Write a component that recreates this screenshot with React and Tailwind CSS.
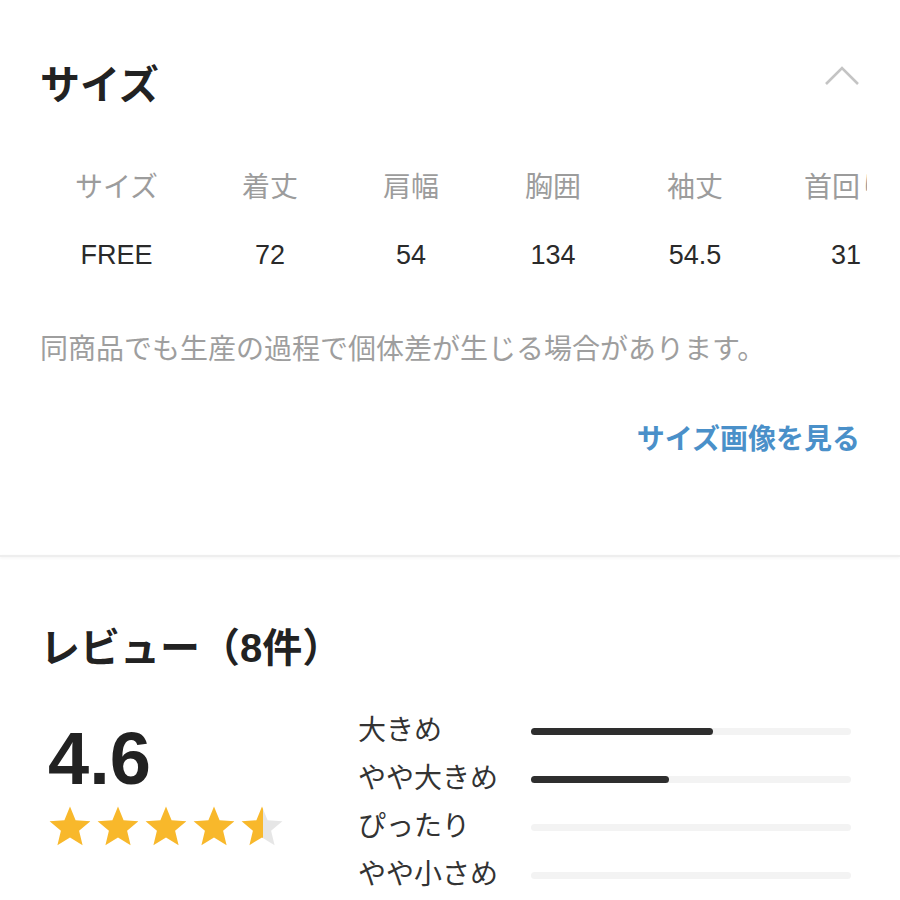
import React from "react";

const FONT = { fontFamily: '"Liberation Sans", "Noto Sans CJK JP", sans-serif' };

function Star({ fill = 1, id }) {
  const d = "M22 1.5 L27.6 15.2 L42.4 16.3 L31.1 25.8 L34.6 40.2 L22 32.4 L9.4 40.2 L12.9 25.8 L1.6 16.3 L16.4 15.2 Z";
  return (
    <svg width="44" height="42" viewBox="0 0 44 42">
      <defs>
        <linearGradient id={id} x1="0" x2="1" y1="0" y2="0">
          <stop offset={fill} stopColor="#f8b82b" />
          <stop offset={fill} stopColor="#e6e6e6" />
        </linearGradient>
      </defs>
      <path d={d} fill={`url(#${id})`} />
    </svg>
  );
}

const heads = ["サイズ", "着丈", "肩幅", "胸囲", "袖丈", "首回り"];
const vals = ["FREE", "72", "54", "134", "54.5", "31"];
const widths = ["w-[153px]", "w-[154px]", "w-[128px]", "w-[156px]", "w-[128px]", "w-[174px]"];

const bars = [
  { label: "大きめ", pct: 57 },
  { label: "やや大きめ", pct: 43 },
  { label: "ぴったり", pct: 0 },
  { label: "やや小さめ", pct: 0 },
];

export default function App() {
  return (
    <div className="w-[900px] h-[900px] bg-white overflow-hidden" style={FONT}>
      {/* Size section */}
      <div className="px-10 pt-[60px]">
        <div className="flex h-[50px] items-center justify-between">
          <div className="text-[40px] font-bold leading-none text-[#222]">サイズ</div>
          <svg width="36" height="22" viewBox="0 0 36 22" className="mb-[20px]">
            <path d="M2 20 L18 4 L34 20" fill="none" stroke="#c4c4c4" strokeWidth="2.6" />
          </svg>
        </div>

        <div className="mt-[48px] w-[827px] overflow-hidden">
          <div className="flex h-[60px] items-center">
            {heads.map((h, i) => (
              <div key={h} className={`${widths[i]} shrink-0 text-center text-[28px] leading-none text-[#9c9c9c] whitespace-nowrap`}>
                {h}
              </div>
            ))}
          </div>
          <div className="mt-[7px] flex h-[60px] items-center">
            {vals.map((v, i) => (
              <div key={v + i} className={`${widths[i]} shrink-0 text-center text-[27px] leading-none text-[#2a2a2a] whitespace-nowrap`}>
                {v}
              </div>
            ))}
          </div>
        </div>

        <div className="mt-[45px] flex h-[40px] items-center text-[28px] leading-none text-[#9e9e9e] whitespace-nowrap">
          同商品でも生産の過程で個体差が生じる場合があります。
        </div>

        <div className="mt-[50px] flex h-[40px] items-center justify-end text-[28px] font-bold leading-none text-[#4a90c9]">
          サイズ画像を見る
        </div>
      </div>

      <div className="mt-[95px] h-[2px] w-full bg-[#eeeeee] shadow-[0_1px_3px_rgba(0,0,0,0.06)]" />

      {/* Review section */}
      <div className="px-10">
        <div className="mt-[66px] flex h-[50px] items-center text-[40px] font-bold leading-none text-[#222] whitespace-nowrap">
          レビュー（8件）
        </div>

        <div className="mt-[34px] flex">
          <div className="w-[318px] shrink-0 pl-2">
            <div className="mt-[15px] h-[74px] text-[74px] font-bold leading-none text-[#222]">4.6</div>
            <div className="mt-[9px] flex gap-[4px]">
              <Star fill={1} id="s1" />
              <Star fill={1} id="s2" />
              <Star fill={1} id="s3" />
              <Star fill={1} id="s4" />
              <Star fill={0.52} id="s5" />
            </div>
          </div>

          <div className="flex flex-col">
            {bars.map((b) => (
              <div key={b.label} className="flex h-[48px] items-center">
                <div className="w-[173px] shrink-0 text-[28px] leading-none text-[#333] whitespace-nowrap">{b.label}</div>
                <div className="relative h-[7px] w-[320px] rounded-full bg-[#f3f3f3]">
                  {b.pct > 0 && (
                    <div className="h-full rounded-full bg-[#2e2e2e]" style={{ width: `${b.pct}%` }} />
                  )}
                </div>
              </div>
            ))}
          </div>
        </div>
      </div>
    </div>
  );
}
